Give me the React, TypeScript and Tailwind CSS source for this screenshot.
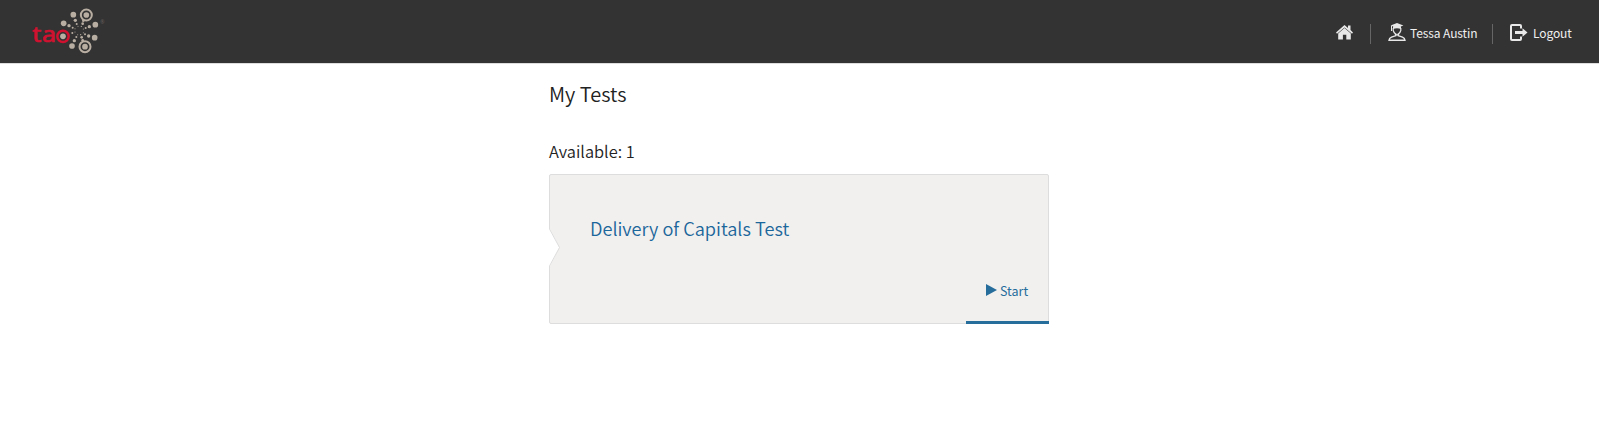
const dots = [
  { x: 160, y: 44, r: 8.5 },
  { x: 131, y: 70, r: 8.5 },
  { x: 226, y: 74, r: 8.5 },
  { x: 224, y: 113, r: 8.5 },
  { x: 156, y: 138, r: 8.5 },
  { x: 166, y: 61, r: 5 },
  { x: 147, y: 77, r: 5 },
  { x: 208, y: 80, r: 5 },
  { x: 206, y: 108, r: 5 },
  { x: 163, y: 122, r: 5 },
  { x: 170, y: 72, r: 3 },
  { x: 158, y: 83, r: 3 },
  { x: 197, y: 84, r: 3 },
  { x: 195, y: 103, r: 3 },
  { x: 169, y: 111, r: 3 },
  { x: 157, y: 99, r: 3 },
  { x: 188, y: 71, r: 4 },
  { x: 185, y: 112, r: 4 },
  { x: 190, y: 62, r: 4 },
  { x: 188, y: 121, r: 4 },
  { x: 174, y: 79, r: 1.5 },
  { x: 184, y: 79, r: 2 },
  { x: 190, y: 87, r: 1.5 },
  { x: 190, y: 98, r: 1.5 },
  { x: 182, y: 104, r: 2 },
  { x: 173, y: 104, r: 1.5 },
  { x: 165, y: 96, r: 1.5 },
  { x: 165, y: 86, r: 1.5 },
];

const rings = [
  { x: 199, y: 45 },
  { x: 195, y: 140 },
];

function Logo() {
  return (
    <svg className="ml-5 h-[63px] w-[100px]" viewBox="0 0 300 189">
      <g fill="#b9aea2">
        {dots.map((dot, index) => (
          <circle key={index} cx={dot.x} cy={dot.y} r={dot.r} />
        ))}
      </g>
      {rings.map((ring) => (
        <g key={ring.y}>
          <circle cx={ring.x} cy={ring.y} r="16.5" fill="none" stroke="#b9aea2" strokeWidth="6" />
          <circle cx={ring.x} cy={ring.y} r="8.5" fill="#b9aea2" />
        </g>
      ))}
      <circle cx="129" cy="109" r="8.5" fill="#b9aea2" />
      {/* wordmark, the ring is its last letter */}
      <g fill="#d0112f" stroke="#d0112f" strokeWidth="2" fontSize="64" fontWeight="400" fontFamily="Noto Sans">
        <text x="37" y="127" textLength="27" lengthAdjust="spacingAndGlyphs">t</text>
        <text x="66" y="127" textLength="42" lengthAdjust="spacingAndGlyphs">a</text>
      </g>
      <circle cx="129" cy="109" r="17" fill="none" stroke="#d0112f" strokeWidth="7.5" />
      <text x="241" y="71" fill="#665f5c" fontSize="15" fontFamily="Noto Sans">®</text>
    </svg>
  );
}

function HomeIcon() {
  return (
    <svg className="h-[15px] w-[17px]" viewBox="0 0 17 15" fill="#e8e8e8">
      <path d="M8.5 0L12 3V0.4H14.5V5L17 7.6L16 8.7L8.5 2.4L1 8.7L0 7.6Z" />
      <path d="M8.5 3L14.8 8.4V14.5H10.3V9.8H6.9V14.5H2.2V8.4Z" />
    </svg>
  );
}

function TestTakerIcon() {
  return (
    <svg className="h-[18px] w-[18px]" viewBox="0 0 18 18" fill="none" stroke="#e8e8e8">
      <path d="M2.6 2.5L9 0L15.4 2.5L9 5Z" fill="#e8e8e8" stroke="none" />
      <path d="M5 3.3H13V6Q9 4.5 5 6Z" fill="#e8e8e8" stroke="none" />
      <path d="M3.5 3V8" />
      <path d="M5.2 5V7.5Q5.8 9.7 7.6 11Q9 11.8 10.4 11Q12.2 9.7 12.8 7.5V5" strokeWidth="1.2" />
      <path d="M7.2 10.5L8 12.6L3.5 14.2Q1.2 15.2 1 17.2H17Q16.8 15.2 14.5 14.2L10 12.6L10.8 10.5" strokeWidth="1.4" />
    </svg>
  );
}

function LogoutIcon() {
  return (
    <svg className="h-[17px] w-[18px]" viewBox="0 0 18 17">
      <path d="M11 4.5V2Q11 1 10 1H2Q1 1 1 2V15Q1 16 2 16H10Q11 16 11 15V12.5" fill="none" stroke="#e8e8e8" strokeWidth="2" />
      <path d="M5 7H12.5V4.3L17.5 8.5L12.5 12.7V10H5Z" fill="#e8e8e8" />
    </svg>
  );
}

export default function App() {
  return (
    <div className="min-h-[425px] bg-white font-['Noto_Sans_CJK_SC',sans-serif] text-[#222]">
      <header className="flex h-16 items-start justify-between border-b border-[#ddd] bg-[#333]">
        <Logo />
        <nav className="flex pt-6 pr-7 text-[12px] leading-5 text-[#f0f0f0]">
          <a href="#home" className="mr-[17px] h-5 pt-px"><HomeIcon /></a>
          <a href="#profile" className="flex h-5 border-l border-[#666] pr-[15px] pl-[17px]">
            <span className="-mt-px mr-1"><TestTakerIcon /></span>
            <span className="-mt-px w-[67px] tracking-[-0.1px] whitespace-nowrap">Tessa Austin</span>
          </a>
          <a href="#logout" className="flex h-5 border-l border-[#666] pl-[17px]">
            <span className="mr-[5px]"><LogoutIcon /></span>
            <span className="-mt-px w-[38px] tracking-[-0.1px] whitespace-nowrap">Logout</span>
          </a>
        </nav>
      </header>

      <div className="pr-px">
        <main className="mx-auto w-[500px] pt-[15px]">
          <h1 className="h-[60px] text-[20px] leading-[30px] font-[350]">My Tests</h1>
          <h2 className="h-[35px] text-[16.4px] leading-6 font-[350]">Available: 1</h2>
          <a href="#start" className="relative flex h-[150px] flex-col justify-between rounded-xs border border-[#ddd] bg-[#f2f0ee] text-[#266d9c]">
            {/* notch cut into the left edge */}
            <svg className="absolute top-[53px] -left-px h-[39px] w-3" viewBox="0 0 12 39">
              <path d="M0 0L1 1L10.5 19.5L1 38L0 39Z" fill="white" />
              <path d="M0.5 0V1L10.5 19.5L0.5 38V39" fill="none" stroke="#ddd" />
            </svg>
            <h3 className="pt-[38px] pl-10 text-[18.2px] leading-[30px] font-[350] text-[#1b669b]">Delivery of Capitals Test</h3>
            <span className="-mr-px -mb-px flex h-[52px] w-[83px] self-end border-b-3 border-[#266d9c] pt-2 pl-5 text-[12.5px] leading-[22px]">
              <svg className="mt-1 mr-[3px] h-3 w-[11px]" viewBox="0 0 11 12" fill="currentColor">
                <path d="M0 0L11 6L0 12Z" />
              </svg>
              Start
            </span>
          </a>
        </main>
      </div>
    </div>
  );
}
